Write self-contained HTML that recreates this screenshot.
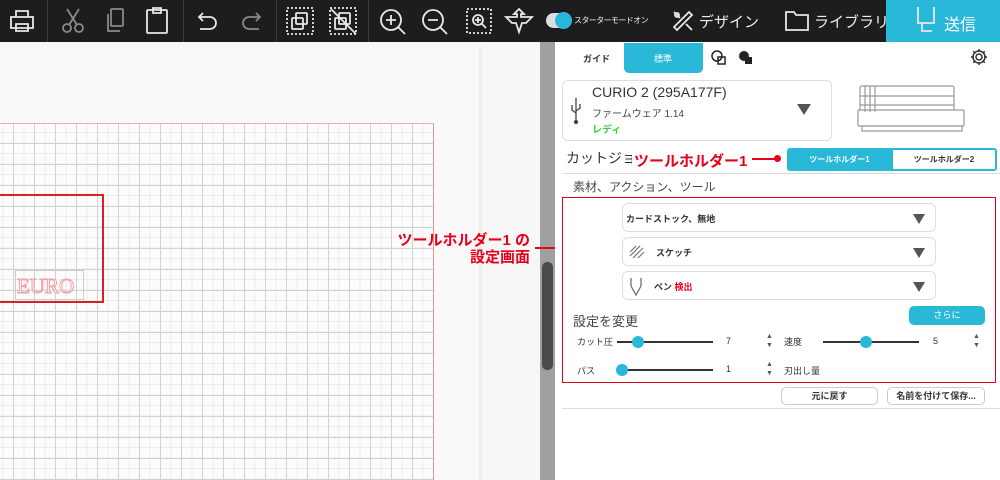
<!DOCTYPE html>
<html><head><meta charset="utf-8"><style>
*{margin:0;padding:0;box-sizing:border-box}
body{width:1000px;height:480px;overflow:hidden;position:relative;background:#f6f6f6;font-family:"Liberation Sans","Noto Sans CJK JP",sans-serif;color:#333}
.a{position:absolute}
#tb{left:0;top:0;width:1000px;height:42px;background:#1d1d1f}
.sep{top:0;width:1px;height:42px;background:#3a3a3a}
svg{position:absolute}
.ic{stroke:#e8e8e8;fill:none;stroke-width:1.8}
.dim{stroke:#8a8a8a}
.t{white-space:nowrap}
.dd{position:absolute;left:622px;width:314px;height:29px;border:1px solid #ddd;border-radius:6px;background:#fff;font-size:9px;font-weight:bold}
.tri{position:absolute;right:10px;top:10px;width:0;height:0;border-left:6px solid transparent;border-right:6px solid transparent;border-top:10px solid #555}
.trk{position:absolute;height:2px;background:#333}
.th{position:absolute;width:12px;height:12px;border-radius:6px;background:#29b8d8}
.btn{position:absolute;height:18px;border:1px solid #ccc;border-radius:5px;background:#fff;font-size:9px;text-align:center;line-height:16px;font-weight:bold}
.red{color:#e8001a;font-weight:bold}
</style></head><body>
<div id="tb" class="a"></div>
<div class="a sep" style="left:47px"></div><div class="a sep" style="left:183px"></div><div class="a sep" style="left:276px"></div><div class="a sep" style="left:368px"></div>
<svg style="left:8px;top:8px" width="28" height="26"><path class="ic" d="M8 9V3h12v6M3 9h22v11H3zM8 16h12v7H8z"/></svg>
<svg style="left:60px;top:7px" width="26" height="28"><g class="ic dim"><circle cx="7" cy="21" r="4"/><circle cx="19" cy="21" r="4"/><path d="M9 18L19 2M17 18L7 2"/></g></svg>
<svg style="left:103px;top:7px" width="24" height="28"><g class="ic dim"><rect x="8" y="2" width="12" height="17" rx="1"/><path d="M5 7v17h12"/></g></svg>
<svg style="left:144px;top:6px" width="26" height="30"><g class="ic"><rect x="3" y="4" width="20" height="23" rx="1"/><path d="M9 2h8v5H9z"/></g></svg>
<svg style="left:196px;top:9px" width="24" height="24"><path class="ic" d="M7 4L3 8l4 4M3 8h11a6 6 0 0 1 0 12H4"/></svg>
<svg style="left:239px;top:9px" width="24" height="24"><path class="ic dim" d="M17 4l4 4-4 4M21 8H10a6 6 0 0 0 0 12h10"/></svg>
<svg style="left:285px;top:6px" width="30" height="30"><g class="ic"><rect x="2" y="2" width="26" height="26" stroke-dasharray="2 2"/><rect x="11" y="7" width="11" height="11" rx="1"/><rect x="7" y="12" width="11" height="11" rx="1"/></g></svg>
<svg style="left:328px;top:6px" width="30" height="30"><g class="ic"><rect x="2" y="2" width="26" height="26" stroke-dasharray="2 2"/><rect x="11" y="7" width="11" height="11" rx="1"/><rect x="7" y="12" width="11" height="11" rx="1"/><path d="M3 3l25 25"/></g></svg>
<svg style="left:378px;top:7px" width="30" height="30"><g class="ic"><circle cx="13" cy="13" r="10"/><path d="M20 20l7 7M13 8v10M8 13h10"/></g></svg>
<svg style="left:420px;top:7px" width="30" height="30"><g class="ic"><circle cx="13" cy="13" r="10"/><path d="M20 20l7 7M8 13h10"/></g></svg>
<svg style="left:465px;top:7px" width="28" height="28"><g class="ic"><rect x="2" y="2" width="24" height="24" stroke-dasharray="2 2"/><circle cx="13" cy="13" r="5"/><path d="M17 17l4 4M13 10v6M10 13h6"/></g></svg>
<svg style="left:504px;top:7px" width="30" height="28"><path class="ic" d="M15 2l5 5h-3v3h11l-6 6h-4l-3 9-3-9H8L2 10h11V7h-3z" stroke-width="1.5"/></svg>
<div class="a" style="left:546px;top:13px;width:24px;height:15px;border-radius:8px;background:#ddd"></div>
<div class="a" style="left:555px;top:12px;width:17px;height:17px;border-radius:9px;background:#29b8d8"></div>
<div class="a t" style="left:574px;top:15px;font-size:8px;color:#eee;letter-spacing:-0.6px">スターターモードオン</div>
<svg style="left:670px;top:8px" width="26" height="26"><g class="ic"><path d="M4 19L19 4l3 3L7 22zM4 4l6 6M16 16l6 6"/><circle cx="7" cy="7" r="2"/></g></svg>
<div class="a t" style="left:699px;top:11px;font-size:15px;color:#eee">デザイン</div>
<svg style="left:784px;top:9px" width="26" height="24"><path class="ic" d="M2 3h8l2 3h12v15H2z"/></svg>
<div class="a t" style="left:814px;top:11px;font-size:15px;color:#eee">ライブラリ</div>
<div class="a" style="left:886px;top:0;width:114px;height:42px;background:#29b8d8"></div>
<svg style="left:914px;top:5px" width="24" height="32"><path class="ic" stroke="#fff" d="M4 2v16h16V2M8 18v8h10"/></svg>
<div class="a t" style="left:944px;top:11px;font-size:16px;color:#fff">送信</div>

<div class="a" style="left:0;top:42px;width:540px;height:438px;background:#f7f7f7"></div>
<div class="a" style="left:0;top:47px;width:482px;height:433px;background:#f9f9f9;border-right:3px solid #eee"></div>
<div class="a" style="left:0;top:123px;width:434px;height:357px;background-color:#fcfcfc;
background-image:linear-gradient(90deg,#d2d2d2 1px,transparent 1px),linear-gradient(#d2d2d2 1px,transparent 1px),linear-gradient(90deg,#ececec 1px,transparent 1px),linear-gradient(#ececec 1px,transparent 1px);
background-size:21px 21px,21px 21px,10.5px 10.5px,10.5px 10.5px;background-position:13px 19px,13px 19px,13px 8px,13px 8px;border-top:1px solid #f0b0b0;border-right:1px solid #f09090"></div>
<div class="a" style="left:-2px;top:194px;width:106px;height:109px;border:2px solid #d8202a"></div>
<div class="a" style="left:15px;top:270px;width:69px;height:30px;border:1px solid #ccc"></div>
<div class="a t" style="left:17px;top:274px;font-family:'Liberation Serif',serif;font-size:21px;color:#fff;-webkit-text-stroke:1px #f0a0a8">EURO</div>
<div class="a" style="left:540px;top:42px;width:15px;height:438px;background:#a0a0a0"></div>
<div class="a" style="left:542px;top:262px;width:11px;height:108px;border-radius:5px;background:#4a4a4a"></div>
<div class="a t red" style="left:388px;top:232px;font-size:15px;text-align:right;width:142px;line-height:17px">ツールホルダー1 の<br>設定画面</div>
<div class="a" style="left:535px;top:247px;width:24px;height:1.5px;background:#e8001a"></div>
<div class="a" style="left:556px;top:244px;width:7px;height:7px;border-radius:4px;background:#e8001a"></div>

<div class="a" style="left:555px;top:42px;width:445px;height:438px;background:#fff"></div>
<div class="a t" style="left:583px;top:52px;font-size:9px;font-weight:bold">ガイド</div>
<div class="a" style="left:624px;top:43px;width:79px;height:30px;background:#29b8d8;border-radius:0 0 5px 5px"></div>
<div class="a t" style="left:654px;top:52px;font-size:9px;color:#fff">標準</div>
<svg style="left:710px;top:49px" width="50" height="18"><g fill="none" stroke="#222" stroke-width="1.5"><circle cx="7" cy="7" r="5"/><rect x="8" y="8" width="7" height="7"/></g><circle cx="34" cy="7" r="5" fill="#222"/><rect x="35" y="8" width="7" height="7" fill="#222"/></svg>
<svg style="left:970px;top:48px" width="18" height="18"><g fill="none" stroke="#333" stroke-width="1.5"><circle cx="9" cy="9" r="3"/><path d="M9 1v3M9 14v3M1 9h3M14 9h3M3.3 3.3l2.1 2.1M12.6 12.6l2.1 2.1M3.3 14.7l2.1-2.1M12.6 5.4l2.1-2.1"/><circle cx="9" cy="9" r="6"/></g></svg>
<div class="a" style="left:562px;top:80px;width:270px;height:61px;border:1px solid #ddd;border-radius:6px"></div>
<svg style="left:569px;top:96px" width="14" height="30"><g fill="none" stroke="#444" stroke-width="1.3"><path d="M7 2v24M3 9v5l4 3M11 8v4l-4 3"/><circle cx="7" cy="26" r="1.5" fill="#444"/></g></svg>
<div class="a t" style="left:592px;top:84px;font-size:14px;color:#333">CURIO 2 (295A177F)</div>
<div class="a t" style="left:592px;top:105px;font-size:10px;color:#444">ファームウェア 1.14</div>
<div class="a t" style="left:592px;top:121px;font-size:10px;color:#3ccf3c;font-weight:bold">レディ</div>
<div class="a" style="left:797px;top:104px;border-left:7px solid transparent;border-right:7px solid transparent;border-top:11px solid #555"></div>
<svg style="left:855px;top:83px" width="115" height="52"><g fill="#fff" stroke="#999" stroke-width="1.2"><rect x="5" y="3" width="94" height="26" rx="2"/><rect x="3" y="27" width="106" height="16" rx="1"/><path d="M10 3v26M15 3v26M20 3v26M5 13h94M5 22h94"/><rect x="7" y="43" width="100" height="5"/></g></svg>
<div class="a t" style="left:566px;top:148px;font-size:14px;color:#333">カットジョブ設定</div>
<div class="a t red" style="left:632px;top:150px;font-size:15px;background:#fff;padding-left:2px">ツールホルダー1</div>
<div class="a" style="left:752px;top:158px;width:24px;height:1.5px;background:#e8001a"></div>
<div class="a" style="left:774px;top:155px;width:7px;height:7px;border-radius:4px;background:#e8001a"></div>
<div class="a" style="left:787px;top:148px;width:105px;height:23px;background:#29b8d8;border-radius:3px 0 0 3px;font-size:8px;color:#fff;text-align:center;line-height:23px;font-weight:bold">ツールホルダー1</div>
<div class="a" style="left:891px;top:148px;width:106px;height:23px;border:2px solid #29b8d8;border-radius:0 3px 3px 0;font-size:8px;text-align:center;line-height:19px;font-weight:bold">ツールホルダー2</div>
<div class="a" style="left:562px;top:173px;width:438px;height:1px;background:#ddd"></div>
<div class="a t" style="left:573px;top:178px;font-size:12px;color:#444">素材、アクション、ツール</div>
<div class="a" style="left:562px;top:197px;width:434px;height:186px;border:1.5px solid #e8001a"></div>
<div class="dd" style="top:203px"><span class="a t" style="left:3px;top:8px">カードストック、無地</span><div class="tri"></div></div>
<div class="dd" style="top:237px"><svg style="left:5px;top:6px" width="18" height="16"><path d="M2 8l6-6M2 12l10-10M5 14l10-10M10 14l6-6" stroke="#777" stroke-width="1.2" fill="none"/></svg><span class="a t" style="left:33px;top:8px">スケッチ</span><div class="tri"></div></div>
<div class="dd" style="top:271px"><svg style="left:7px;top:5px" width="12" height="20"><path d="M1 1v8l5 9 5-9V1" stroke="#666" stroke-width="1.2" fill="none"/></svg><span class="a t" style="left:31px;top:8px">ペン <span style="color:#e8001a">検出</span></span><div class="tri"></div></div>
<div class="a t" style="left:573px;top:311px;font-size:13px;color:#444">設定を変更</div>
<div class="a" style="left:909px;top:306px;width:76px;height:19px;background:#29b8d8;border-radius:5px;font-size:9px;color:#fff;text-align:center;line-height:19px">さらに</div>
<div class="a t" style="left:577px;top:335px;font-size:9px">カット圧</div>
<div class="trk" style="left:617px;top:341px;width:96px"></div><div class="th" style="left:632px;top:336px"></div>
<div class="a t" style="left:726px;top:336px;font-size:9px">7</div>
<div class="a t" style="left:766px;top:332px;font-size:7px;line-height:9px;color:#555">▲<br>▼</div>
<div class="a t" style="left:784px;top:335px;font-size:9px">速度</div>
<div class="trk" style="left:823px;top:341px;width:96px"></div><div class="th" style="left:860px;top:336px"></div>
<div class="a t" style="left:933px;top:336px;font-size:9px">5</div>
<div class="a t" style="left:973px;top:332px;font-size:7px;line-height:9px;color:#555">▲<br>▼</div>
<div class="a t" style="left:577px;top:364px;font-size:9px">パス</div>
<div class="trk" style="left:617px;top:369px;width:96px"></div><div class="th" style="left:616px;top:364px"></div>
<div class="a t" style="left:726px;top:364px;font-size:9px">1</div>
<div class="a t" style="left:766px;top:360px;font-size:7px;line-height:9px;color:#555">▲<br>▼</div>
<div class="a t" style="left:784px;top:364px;font-size:9px">刃出し量</div>
<div class="btn" style="left:781px;top:387px;width:97px">元に戻す</div>
<div class="btn" style="left:887px;top:387px;width:98px">名前を付けて保存...</div>
<div class="a" style="left:562px;top:408px;width:438px;height:1px;background:#ddd"></div>
</body></html>
